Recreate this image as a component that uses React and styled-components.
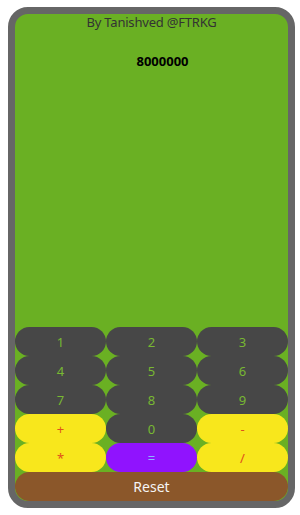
import React from 'react';
import styled, { createGlobalStyle } from 'styled-components';

const GlobalStyle = createGlobalStyle`
  html, body {
    margin: 0;
    padding: 0;
    background: #ffffff;
  }
  body {
    font-family: "Noto Sans", "Open Sans", sans-serif;
  }
`;

const keys = [
  { label: '1', kind: 'digit' },
  { label: '2', kind: 'digit' },
  { label: '3', kind: 'digit' },
  { label: '4', kind: 'digit' },
  { label: '5', kind: 'digit' },
  { label: '6', kind: 'digit' },
  { label: '7', kind: 'digit' },
  { label: '8', kind: 'digit' },
  { label: '9', kind: 'digit' },
  { label: '+', kind: 'op' },
  { label: '0', kind: 'digit' },
  { label: '-', kind: 'op' },
  { label: '*', kind: 'op' },
  { label: '=', kind: 'equals' },
  { label: '/', kind: 'op' },
];

const palette = {
  digit: { bg: '#474747', fg: '#78b832' },
  op: { bg: '#f8e71c', fg: '#e0501b' },
  equals: { bg: '#9013fe', fg: '#8cb4ff' },
};

export default function App() {
  return (
    <>
      <GlobalStyle />
      <Frame>
        <Screen>
          <Credit>By Tanishved @FTRKG</Credit>
          <Result>8000000</Result>
        </Screen>
        <Pad>
          {keys.map((k) => (
            <Key key={k.label} $kind={k.kind}>
              {k.label}
            </Key>
          ))}
        </Pad>
        <Reset>Reset</Reset>
      </Frame>
    </>
  );
}

const Frame = styled.div`
  display: flex;
  flex-direction: column;
  box-sizing: border-box;
  width: 287px;
  height: 501px;
  margin: 7px 0 0 8px;
  border: 7px solid #666666;
  border-radius: 20px;
  background: #6ab023;
  overflow: hidden;
`;

const Screen = styled.div`
  flex: 1;
  display: flex;
  flex-direction: column;
  align-items: center;
`;

const Credit = styled.div`
  font-size: 13px;
  line-height: 17px;
  letter-spacing: -0.2px;
  color: #333333;
`;

const Result = styled.div`
  margin: 21px 0 0 22px;
  font-size: 13px;
  font-weight: 700;
  color: #000000;
`;

const Pad = styled.div`
  display: grid;
  grid-template-columns: repeat(3, 1fr);
  grid-auto-rows: 29px;
`;

const Key = styled.button`
  border: none;
  border-radius: 15px;
  margin: 0;
  padding: 0;
  font-family: inherit;
  font-size: 13px;
  background: ${(p) => palette[p.$kind].bg};
  color: ${(p) => palette[p.$kind].fg};
`;

const Reset = styled.button`
  height: 29px;
  border: none;
  border-radius: 15px;
  margin: 0;
  padding: 0;
  font-family: inherit;
  font-size: 14px;
  background: #8b572a;
  color: #f5f5f5;
`;
